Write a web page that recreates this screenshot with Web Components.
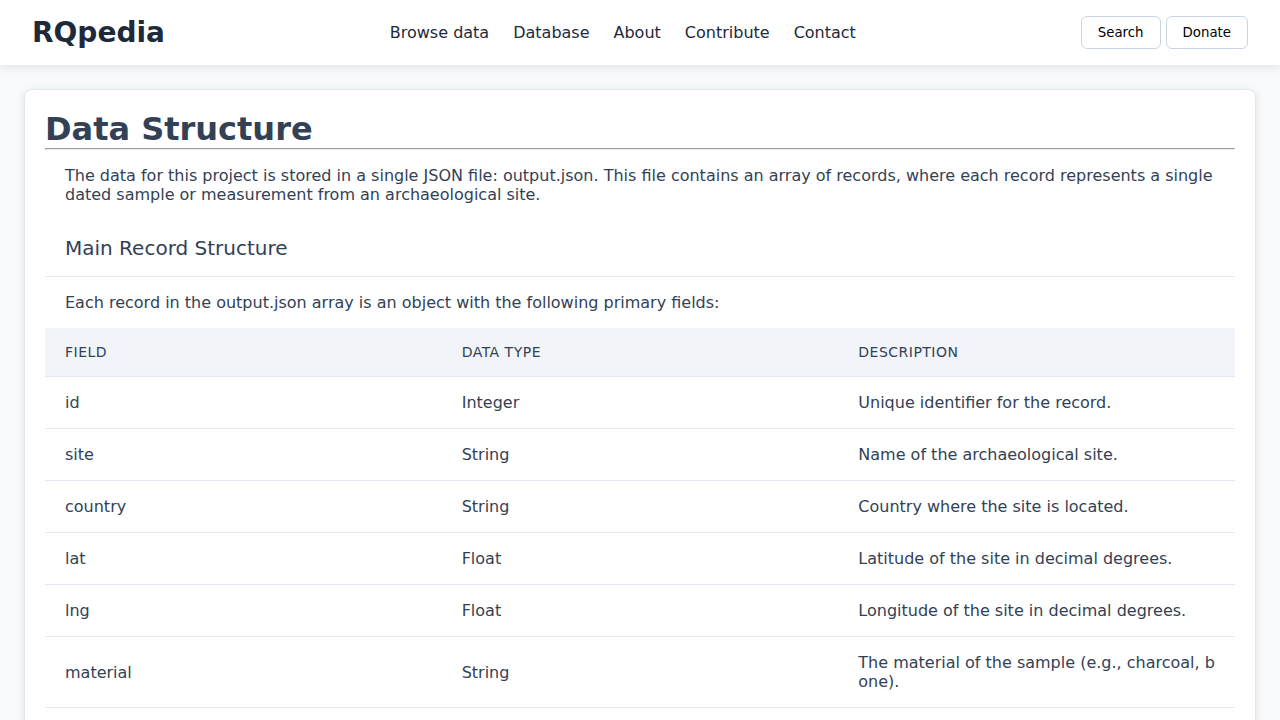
<!DOCTYPE html>
<html lang="en">
<head>
<meta charset="utf-8">
<meta name="viewport" content="width=device-width, initial-scale=1">
<title>RQpedia - Data Structure</title>
<style>
body { margin: 0; background: #f8fafc; color: #334155; font-family: "DejaVu Sans", sans-serif; font-size: 16px; }
</style>
</head>
<body>
<site-header></site-header>
<doc-card heading="Data Structure">
  <doc-text>The data for this project is stored in a single JSON file: output.json. This file contains an array of records, where each record represents a single dated sample or measurement from an archaeological site.</doc-text>
  <section-title>Main Record Structure</section-title>
  <doc-text>Each record in the output.json array is an object with the following primary fields:</doc-text>
  <field-table></field-table>
</doc-card>
<script>
class BaseElement extends HTMLElement {
  connectedCallback() {
    if (this.shadowRoot) return;
    this.attachShadow({ mode: "open" }).innerHTML = this.render();
  }
}

customElements.define("outline-button", class extends BaseElement {
  render() {
    return `<style>
      :host { display: block; }
      button { display: block; padding: 8px 16px; border: 1px solid #cbd5e1; border-radius: 6px; background: #fff; color: #000; font-family: inherit; line-height: normal; cursor: pointer; }
    </style><button type="button"><slot></slot></button>`;
  }
});

customElements.define("site-header", class extends BaseElement {
  render() {
    return `<style>
      :host { display: block; position: relative; background: #fff; box-shadow: 0 2px 10px rgba(0, 0, 0, .1); color: #1e293b; }
      header { display: flex; align-items: center; justify-content: space-between; padding: 16px 32px; }
      .brand { font-size: 28px; line-height: 33px; font-weight: 700; }
      nav { display: flex; gap: 24px; }
      a { color: inherit; text-decoration: none; }
      .actions { display: flex; gap: 5px; }
    </style>
    <header>
      <a class="brand" href="#">RQpedia</a>
      <nav>
        <a href="#">Browse data</a><a href="#">Database</a><a href="#">About</a><a href="#">Contribute</a><a href="#">Contact</a>
      </nav>
      <div class="actions"><outline-button>Search</outline-button><outline-button>Donate</outline-button></div>
    </header>`;
  }
});

customElements.define("doc-card", class extends BaseElement {
  render() {
    return `<style>
      :host { display: block; margin: 24px; padding: 20px; border: 1px solid #e2e8f0; border-radius: 8px; background: #fff; box-shadow: 0 2px 10px rgba(0, 0, 0, .1); }
      h1 { margin: 0; font-size: 32px; line-height: 38px; }
      hr { margin: 0; }
    </style><h1>${this.getAttribute("heading")}</h1><hr><slot></slot>`;
  }
});

customElements.define("doc-text", class extends BaseElement {
  render() {
    return `<style>:host { display: block; } p { margin: 0; padding: 16px 20px; line-height: 19px; }</style><p><slot></slot></p>`;
  }
});

customElements.define("section-title", class extends BaseElement {
  render() {
    return `<style>
      :host { display: block; border-bottom: 1px solid #e2e8f0; }
      h2 { margin: 0; padding: 16px 20px; font-size: 20px; line-height: 24px; font-weight: 400; }
    </style><h2><slot></slot></h2>`;
  }
});

customElements.define("field-table", class extends BaseElement {
  render() {
    const rows = [
      ["id", "Integer", "Unique identifier for the record."],
      ["site", "String", "Name of the archaeological site."],
      ["country", "String", "Country where the site is located."],
      ["lat", "Float", "Latitude of the site in decimal degrees."],
      ["lng", "Float", "Longitude of the site in decimal degrees."],
      ["material", "String", "The material of the sample (e.g., charcoal, bone)."]
    ];
    return `<style>
      :host { display: block; }
      table { width: 100%; table-layout: fixed; border-collapse: separate; border-spacing: 0; }
      th, td { padding: 16px 20px; border-bottom: 1px solid #e2e8f0; text-align: left; vertical-align: middle; line-height: 19px; word-break: break-all; }
      th { background: #f1f5f9; font-size: 14px; line-height: 16px; font-weight: 400; letter-spacing: .035em; text-transform: uppercase; }
    </style>
    <table>
      <thead><tr><th scope="col">Field</th><th scope="col">Data type</th><th scope="col">Description</th></tr></thead>
      <tbody>${rows.map(r => `<tr>${r.map(c => `<td>${c}</td>`).join("")}</tr>`).join("")}</tbody>
    </table>`;
  }
});
</script>
</body>
</html>
